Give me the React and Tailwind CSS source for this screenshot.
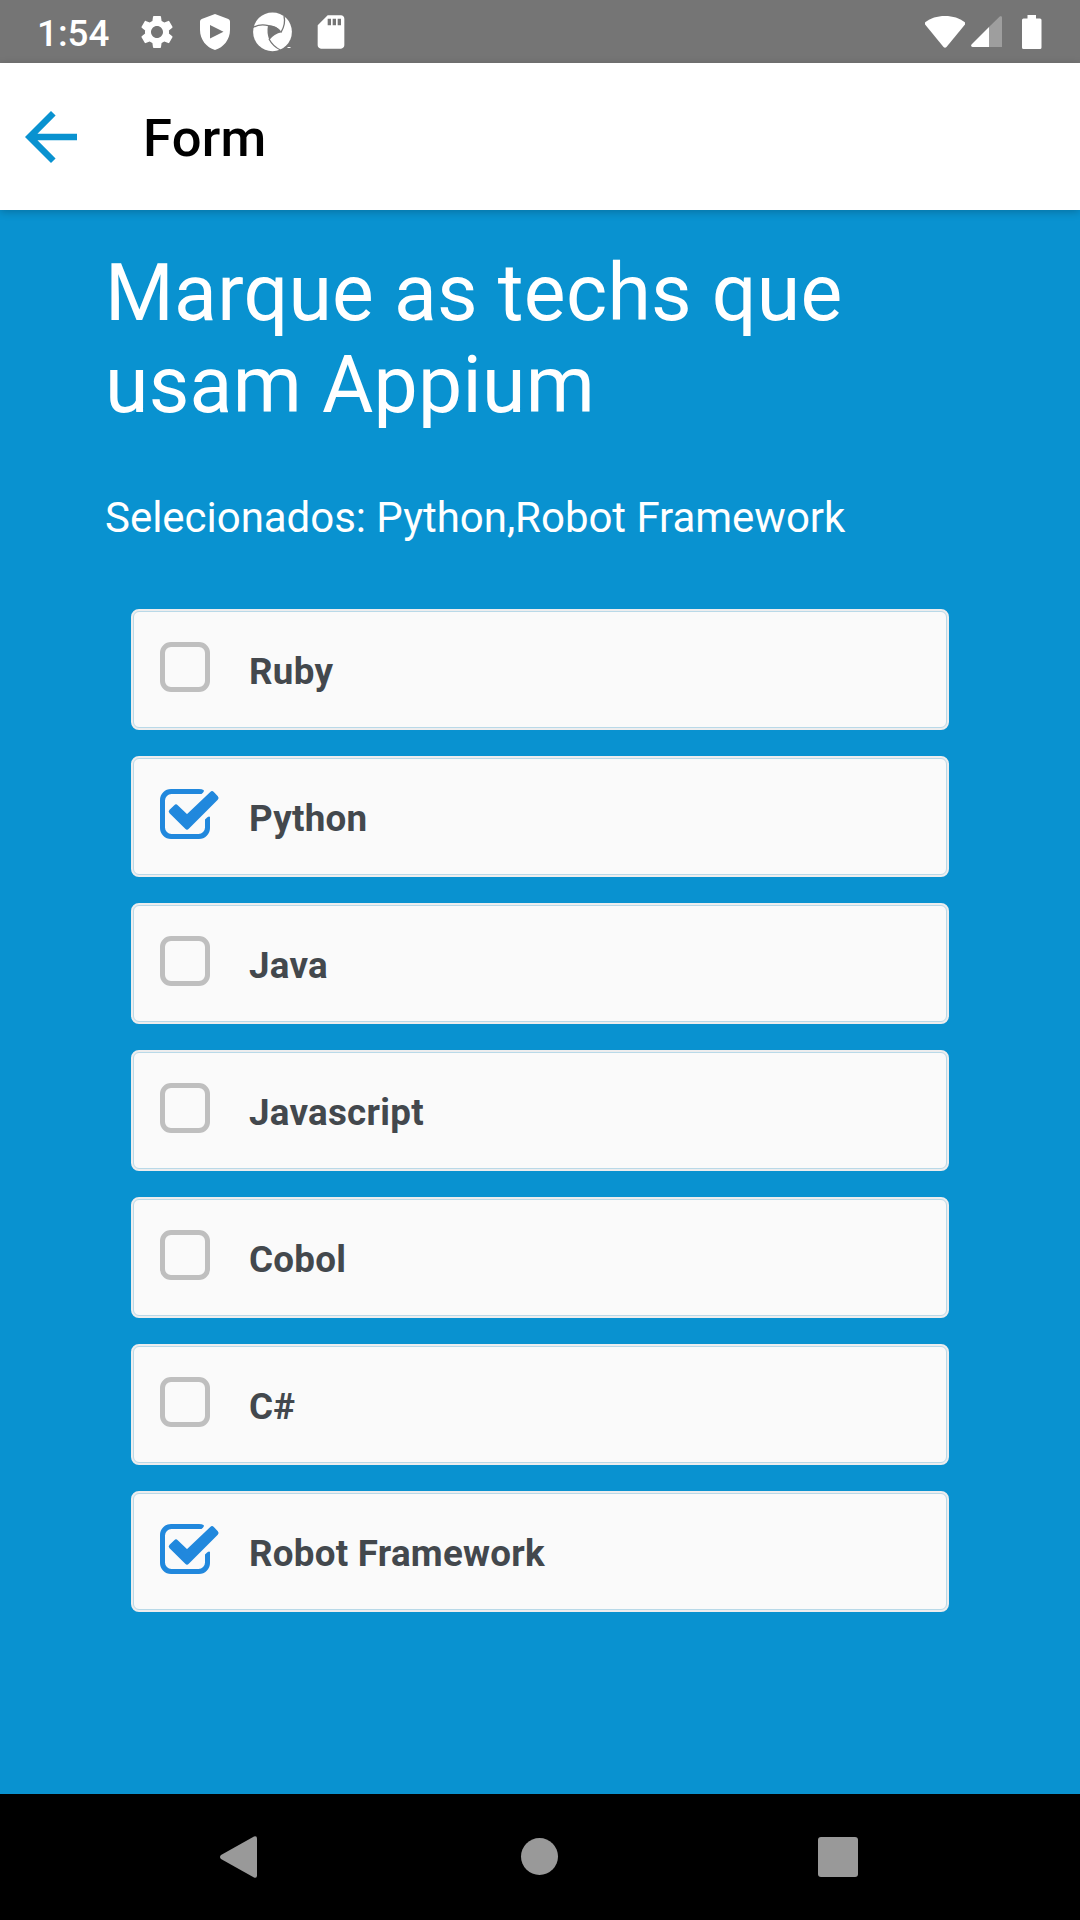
import { MdSettings, MdSdCard, MdArrowBack } from "react-icons/md";

const techs = [
  { name: "Ruby", checked: false },
  { name: "Python", checked: true },
  { name: "Java", checked: false },
  { name: "Javascript", checked: false },
  { name: "Cobol", checked: false },
  { name: "C#", checked: false },
  { name: "Robot Framework", checked: true },
];

function ShieldIcon() {
  return (
    <svg className="ml-[23px] h-9 w-[30px]" viewBox="0 0 30 36" fill="white">
      <path
        fillRule="evenodd"
        d="M15 0 L28.3 5 Q30 5.7 30 7.5 V16 C30 25.5 23.5 33.5 15 36 C6.5 33.5 0 25.5 0 16 V7.5 Q0 5.7 1.7 5 Z M10 11 V24.5 L23.5 17.7 Z"
      />
    </svg>
  );
}

function ApertureIcon() {
  return (
    <svg className="ml-[23px] h-10 w-10" viewBox="0 0 40 40">
      <circle cx="19.5" cy="19.8" r="19.4" fill="white" />
      <path d="M15 13.5 Q23 12.500 28.700 20.300 Q21 22 16.300 28 Q13.500 20.500 15 13.5 Z" fill="#757575" />
      <g fill="none" stroke="#757575" strokeWidth="1.3">
        <path d="M0 15.500 Q7 11.500 15.500 13.700 Q23 14.500 27 19" />
        <path d="M31 4 Q33 12 28 20.300" />
        <path d="M16 27 Q20 34.500 27.500 38" />
      </g>
      <path d="M-0.500 16 L0 8 L4 7 Z" fill="#757575" opacity="0.2" />
      <rect x="34.5" y="35" width="3" height="1" fill="white" />
    </svg>
  );
}

function StatusBar() {
  return (
    <div className="flex h-[63px] items-center bg-[#757575] pr-[38px] pl-[37px] text-white">
      <span className="mt-[3px] w-[100px] text-[36.75px] leading-[43px] font-medium">1:54</span>
      <MdSettings className="h-[40px] w-[40px]" />
      <ShieldIcon />
      <ApertureIcon />
      <MdSdCard className="ml-[18px] h-[40px] w-[40px]" />
      <svg className="ml-auto h-8 w-10" viewBox="0 0 40 32" fill="white">
        <path d="M20 0 C28 0 34.5 2.3 39.5 6 Q41 7.3 39.8 8.8 L21.5 31 Q20 32.3 18.5 31 L0.3 8.8 Q-0.8 7.3 0.5 6 C5.5 2.3 12 0 20 0 Z" />
      </svg>
      <svg className="ml-[6px] h-[31px] w-[31px]" viewBox="0 0 31 31" fill="white">
        <path d="M29 0.3 Q31 -0.3 31 1.5 V31 H18 V11 Z" opacity="0.3" />
        <path d="M18 11 V31 H1.5 Q-0.7 30.5 0.5 28.6 Z" />
      </svg>
      <svg className="ml-5 h-[34px] w-5" viewBox="0 0 20 34" fill="white">
        <path d="M5.5 0 H14 V3.5 H18 Q19.500 3.500 19.500 5 V32.500 Q19.500 34 18 34 H1.500 Q0 34 0 32.500 V5 Q0 3.500 1.500 3.500 H5.500 Z" />
      </svg>
    </div>
  );
}

function Checkbox({ checked }) {
  if (!checked) {
    return <div className="h-[50px] w-[50px] rounded-[11px] border-[5px] border-[#bfbfbf]" />;
  }
  return (
    <svg className="h-[50px] w-[60px]" viewBox="0 0 60 50" fill="#2188dd">
      <path d="M43.5 1 Q42 0 39 0 H11 A11 11 0 0 0 0 11 V39 A11 11 0 0 0 11 50 H39 A11 11 0 0 0 50 39 V28 Q49 26 45 30.5 V38.500 A6.500 6.500 0 0 1 38.500 45 H11.500 A6.500 6.500 0 0 1 5 38.500 V11.500 A6.500 6.500 0 0 1 11.500 5 H41.500 Q45 2 43.500 1 Z" />
      <path
        d="M11.3 22.5 L16 18 L27 28.6 L52 4.7 L56 9 L27 38 Z"
        stroke="#2188dd"
        strokeWidth="5"
        strokeLinejoin="round"
      />
    </svg>
  );
}

function TechRow({ name, checked }) {
  return (
    <div className="h-[121px] rounded-[8px] border-2 border-[#ededee] bg-[#ededee]">
      <div className="flex h-full items-start rounded-[6px] border border-[#b9d9e8] bg-[#fafafa] pt-[30px] pl-[26px]">
        <div className="w-[89px]">
          <Checkbox checked={checked} />
        </div>
        <span className="mt-[8px] text-[36.75px] leading-[43px] font-bold tracking-[0.26px] text-[#43484d]">{name}</span>
      </div>
    </div>
  );
}

export default function App() {
  return (
    <div className="flex h-[1920px] w-[1080px] flex-col overflow-hidden bg-[#0992d0] font-['Roboto',sans-serif]">
      <StatusBar />
      <header className="z-10 flex h-[147px] items-center bg-white pl-3 shadow-[0_2px_8px_rgba(0,0,0,0.22)]">
        <MdArrowBack className="h-[78px] w-[78px] text-[#0992d0]" />
        <h1 className="mt-[3px] ml-[53px] text-[52.5px] leading-[62px] font-medium tracking-[0.3px] text-black">Form</h1>
      </header>
      <main className="flex-1 pt-[37px] text-white">
        <h2 className="pl-[105px] text-[78.75px] leading-[92px] tracking-[0.28px]">
          Marque as techs que
          <br />
          usam Appium
        </h2>
        <p className="mt-[62px] pl-[105px] text-[42px] leading-[49px] tracking-[-0.03px]">
          Selecionados: Python,Robot Framework
        </p>
        <div className="mt-[67px] ml-[131px] flex w-[818px] flex-col gap-[26px]">
          {techs.map((tech) => (
            <TechRow key={tech.name} {...tech} />
          ))}
        </div>
      </main>
      <nav className="flex h-[126px] items-center bg-black pl-[220px]">
        <svg className="h-[42px] w-[37px]" viewBox="0 0 37 42" fill="#999">
          <path d="M34 0.4 Q37 -0.5 37 2.5 V39.5 Q37 42.5 34 41.5 L1 23 Q-1 21 1 19 Z" />
        </svg>
        <div className="mb-[1px] ml-[264px] h-[37px] w-[37px] rounded-full bg-[#999]" />
        <div className="ml-[260px] h-10 w-10 rounded-[3px] bg-[#999]" />
      </nav>
    </div>
  );
}
